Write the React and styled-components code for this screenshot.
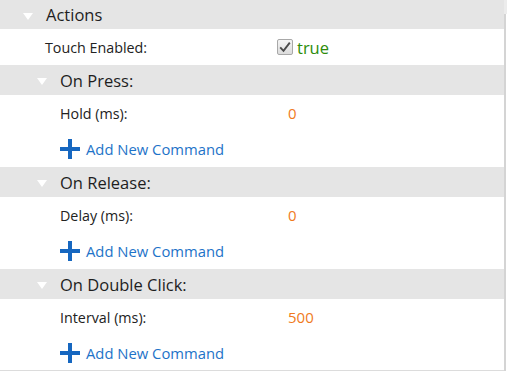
import React from 'react';
import styled, { createGlobalStyle } from 'styled-components';

const Global = createGlobalStyle`
  html, body {
    margin: 0;
    padding: 0;
    background: #fff;
  }
  body {
    font-family: "Open Sans", "Noto Sans", "Liberation Sans", sans-serif;
    color: #222;
  }
`;

const Frame = styled.div`
  display: flex;
  width: 507px;
  height: 372px;
  overflow: hidden;
`;

const Panel = styled.div`
  width: 504px;
  display: flex;
  flex-direction: column;
  height: 371px;
  border-bottom: 1px solid #dcdcdc;
  box-sizing: border-box;
`;

const ScrollTrack = styled.div`
  width: 3px;
  display: flex;
  flex-direction: column;
  height: 371px;
`;

const ScrollTop = styled.div`
  height: 14px;
  background: #ececec;
`;

const ScrollBody = styled.div`
  flex: 1;
  background: #d4d4d4;
  margin-right: 1px;
`;

const Header = styled.div`
  height: ${(p) => p.height}px;
  background: #e5e5e5;
  display: flex;
  align-items: center;
  padding-left: ${(p) => p.indent}px;
  font-size: 16.5px;
  color: #1e1e1e;
  flex-shrink: 0;
`;

const Caret = styled.span`
  width: 0;
  height: 0;
  border-left: 5px solid transparent;
  border-right: 5px solid transparent;
  border-top: 7px solid #ffffff;
  margin-right: ${(p) => p.gap}px;
  margin-top: 3px;
`;

const Row = styled.div`
  height: 36px;
  display: grid;
  grid-template-columns: ${(p) => 277 - p.indent}px 1fr;
  align-items: center;
  padding-left: ${(p) => p.indent}px;
  font-size: 14.3px;
  color: #222;
  flex-shrink: 0;
`;

const Value = styled.span`
  color: ${(p) => p.color};
  padding-left: ${(p) => p.offset || 0}px;
  font-size: ${(p) => p.size || 15}px;
  display: flex;
  align-items: center;
`;

const Check = styled.span`
  width: 14px;
  height: 14px;
  border: 1px solid #a8a8a8;
  border-radius: 2px;
  background: linear-gradient(#f4f4f4, #dcdcdc);
  display: flex;
  align-items: center;
  justify-content: center;
  margin-right: 4px;
  overflow: hidden;
`;

const AddRow = styled.div`
  height: 36px;
  display: flex;
  align-items: center;
  padding-left: 60px;
  font-size: 14.8px;
  color: #1e73c8;
  flex-shrink: 0;
`;

const Plus = styled.svg`
  width: 20px;
  height: 20px;
  margin-right: 6px;
`;

const AddCommand = () => (
  <AddRow>
    <Plus viewBox="0 0 20 20">
      <rect x="8" y="0" width="4" height="20" fill="#1667c0" />
      <rect x="0" y="8" width="20" height="4" fill="#1667c0" />
    </Plus>
    Add New Command
  </AddRow>
);

const sections = [
  { title: 'On Press:', label: 'Hold (ms):', value: '0' },
  { title: 'On Release:', label: 'Delay (ms):', value: '0' },
  { title: 'On Double Click:', label: 'Interval (ms):', value: '500' },
];

export default function App() {
  return (
    <>
      <Global />
      <Frame>
        <Panel>
          <Header indent={23} height={29}>
            <Caret gap={13} />
            Actions
          </Header>
          <Row indent={45}>
            <span>Touch Enabled:</span>
            <Value color="#2d8c0a" size={16.5}>
              <Check>
                <svg width="12" height="12" viewBox="0 0 12 12">
                  <path d="M1.2 6.4 L4.5 9.8 L10.8 1.6" fill="none" stroke="#4a4a4a" strokeWidth="1.9" />
                </svg>
              </Check>
              true
            </Value>
          </Row>
          {sections.map((s) => (
            <React.Fragment key={s.title}>
              <Header indent={37} height={30}>
                <Caret gap={13} />
                {s.title}
              </Header>
              <Row indent={60}>
                <span>{s.label}</span>
                <Value color="#f07a1c" offset={11}>{s.value}</Value>
              </Row>
              <AddCommand />
            </React.Fragment>
          ))}
        </Panel>
        <ScrollTrack>
          <ScrollTop />
          <ScrollBody />
        </ScrollTrack>
      </Frame>
    </>
  );
}
